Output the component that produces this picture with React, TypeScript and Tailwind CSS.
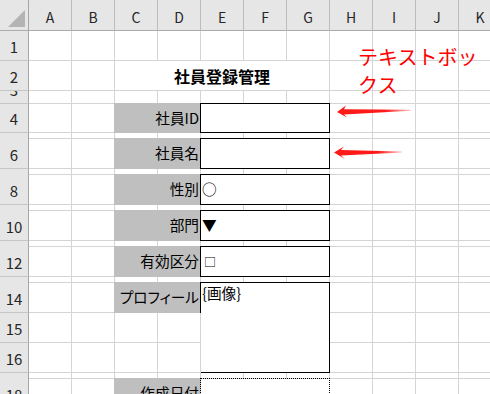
import type { ReactNode } from "react";

const COLS = ["A", "B", "C", "D", "E", "F", "G", "H", "I", "J", "K"];
const ROWS = [1, 2, 3, 4, 5, 6, 7, 8, 9, 10, 11, 12, 13, 14, 15, 16, 17, 18];
// 高さ6pxの行は番号が見えない
const SPACER_ROWS = [5, 7, 9, 11, 13, 17];

type Field = { label: string; value?: string; tall?: boolean; dotted?: boolean; palt?: boolean; small?: boolean };

const FIELDS: Record<number, Field> = {
  4: { label: "社員ID" },
  6: { label: "社員名" },
  8: { label: "性別", value: "○" },
  10: { label: "部門", value: "▼" },
  12: { label: "有効区分", value: "□", small: true },
  14: { label: "プロフィール", value: "{画像}", tall: true, palt: true },
  18: { label: "作成日付", dotted: true },
};

const cell = "border-r border-b border-[#d4d4d4]";

function rowCells(row: number) {
  const out: ReactNode[] = [];
  const field = FIELDS[row];

  out.push(
    <div
      key={`h${row}`}
      className="flex items-end justify-center overflow-hidden pb-[6px] bg-[#e6e6e6] border-r border-b border-r-[#a6a6a6] border-b-[#c6c6c6] text-[15px] leading-none text-[#262626]"
    >
      {SPACER_ROWS.includes(row) ? null : row}
    </div>
  );

  for (let i = 0; i < COLS.length; i++) {
    const c = COLS[i];
    const key = `${c}${row}`;

    if (row === 2 && c === "C") {
      out.push(
        <div key={key} className={`col-span-5 flex items-center justify-center text-[16px] font-bold ${cell}`}>
          社員登録管理
        </div>
      );
      i += 4;
      continue;
    }

    if (field && c === "C") {
      out.push(
        <div
          key={key}
          className={`-ml-px -mt-px col-span-2 flex items-center justify-end overflow-hidden bg-[#bfbfbf] pr-[2px] text-[14.67px] leading-none ${
            field.palt ? "[font-feature-settings:'palt']" : ""
          }`}
        >
          {field.label}
        </div>
      );
      i += 1;
      continue;
    }

    if (field && c === "E") {
      let cls = "-ml-px -mt-px col-span-3 flex items-center border border-black pl-[1px] text-[14.67px] leading-none";
      if (field.tall) cls = "-ml-px -mt-px col-span-3 row-span-3 flex items-start border border-black pl-[1px] pt-[1px] text-[14.67px] leading-[18px]";
      if (field.dotted) cls = "-ml-px -mt-px col-span-3 border border-dotted border-black";
      out.push(
        <div key={key} className={cls}>
          {field.small ? <span className="pl-[2px] text-[12px]">{field.value}</span> : field.value}
        </div>
      );
      i += 2;
      continue;
    }

    if ((row === 15 || row === 16) && (c === "E" || c === "F" || c === "G")) continue;

    out.push(<div key={key} className={cell} />);
  }
  return out;
}

export default function App() {
  return (
    <div className="relative h-[394px] w-[490px] overflow-hidden bg-white font-['Noto_Sans_CJK_JP',sans-serif] text-black">
      <div className="grid grid-cols-[29px_repeat(11,43px)] grid-rows-[31px_30px_30px_13px_29px_6px_30px_6px_30px_6px_30px_6px_30px_6px_30px_30px_30px_6px_30px]">
        {/* 左上の角 */}
        <div className="flex items-end justify-end bg-[#e6e6e6] pb-[3px] pr-[3px] border-r border-b border-r-[#a6a6a6] border-b-[#ababab]">
          <svg width="17" height="17" viewBox="0 0 17 17">
            <polygon points="0,17 17,17 17,0" fill="#b4b4b4" />
          </svg>
        </div>
        {COLS.map((c) => (
          <div
            key={c}
            className="flex items-end justify-center pb-[6px] bg-[#e6e6e6] border-r border-b border-r-[#bcbcbc] border-b-[#ababab] text-[14px] leading-none text-[#262626]"
          >
            {c}
          </div>
        ))}
        {ROWS.map((r) => rowCells(r))}
      </div>

      {/* テキストボックス注記 */}
      <div className="absolute left-[358px] top-[43px] w-[126px] text-[20px] leading-[28px] text-[#ff0000]">
        テキストボックス
      </div>

      <svg className="absolute left-[330px] top-[100px]" width="90" height="65" viewBox="0 0 90 65">
        <defs>
          <linearGradient id="fade" x1="0" y1="0" x2="1" y2="0">
            <stop offset="0" stopColor="#ff1a1a" />
            <stop offset="0.65" stopColor="#ff1a1a" />
            <stop offset="1" stopColor="#ff1a1a" stopOpacity="0.25" />
          </linearGradient>
        </defs>
        <polygon points="7,12 16,5.5 14,9.3 81,9.8 81,10.8 14,14.6 17,17.5" fill="url(#fade)" />
        <polygon points="4,52.5 14,46.5 11,50 72,51.6 72,52.4 11,55.6 15,59" fill="url(#fade)" />
      </svg>
    </div>
  );
}
